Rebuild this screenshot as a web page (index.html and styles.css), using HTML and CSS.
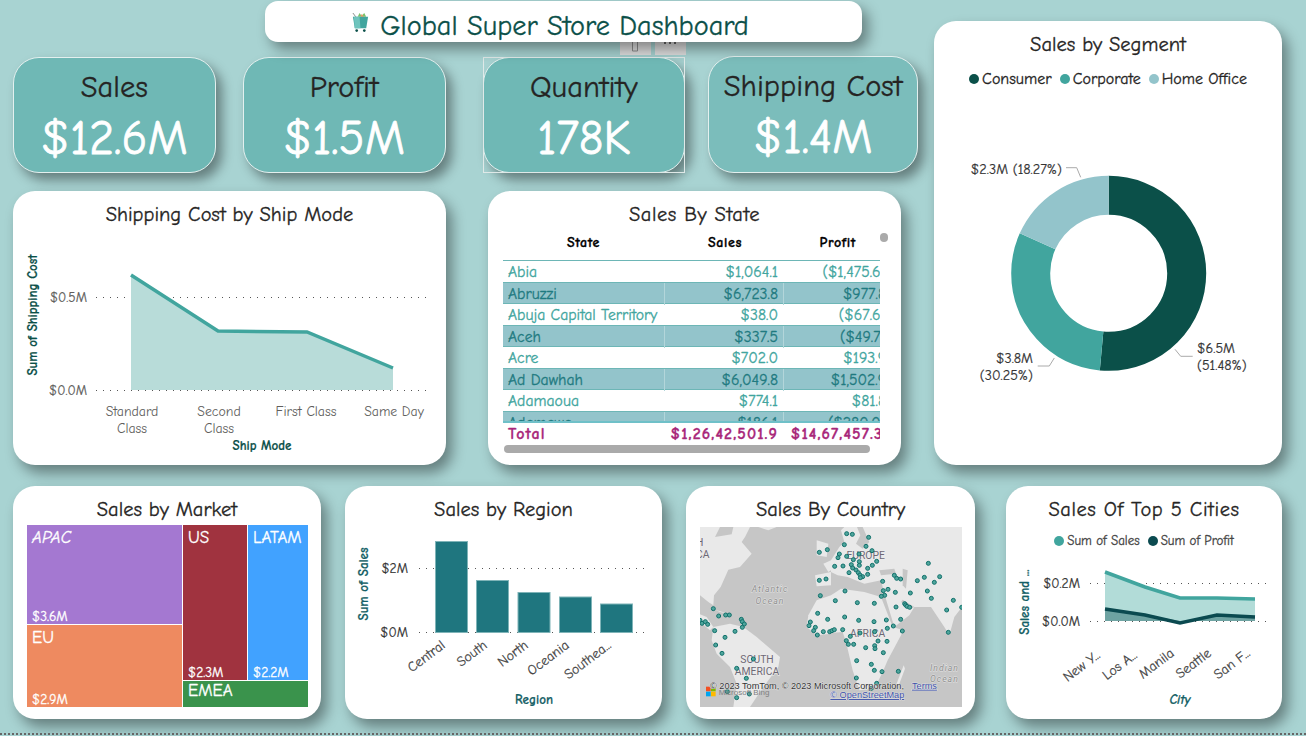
FILE: index.html
```html
<!DOCTYPE html>
<html lang="en">
<head>
    <meta charset="UTF-8">
    <title>Global Super Store Dashboard</title>
    <link rel="stylesheet" href="styles.css">
</head>
<body>
    <div class="page">
        <div class="top">
            <div class="left">
                <div class="header">
                    <svg class="cart" viewBox="0 0 20 22" width="19" height="21">
                        <path d="M2 1l3 4" stroke="#8a8a8a" fill="none"/>
                        <path d="M7 5l2-4 2 3 3-3 2 4z" fill="#7cc36a"/>
                        <path d="M10 5l1-3 3 3z" fill="#ee9a6a"/>
                        <path d="M2 5h16l-2 12H4z" fill="#41a59e"/>
                        <path d="M3 5h6l1 12H4z" fill="#6fc4bd"/>
                        <circle cx="6" cy="19.500" r="1.400" fill="#0b5049"/>
                        <circle cx="14" cy="19.500" r="1.400" fill="#0b5049"/>
                    </svg>
                    <span>Global Super Store Dashboard</span>
                </div>
                <div class="kpis">
                    <div class="kpi kpi-sales"><div class="kpi-label">Sales</div><div class="kpi-value">$12.6M</div></div>
                    <div class="kpi kpi-profit"><div class="kpi-label">Profit</div><div class="kpi-value">$1.5M</div></div>
                    <div class="kpi kpi-qty">
                        <div class="kpi-tools">
                            <div class="tool"><svg width="8" height="10" viewBox="0 0 8 10"><path d="M1.500 0v9h5V0" fill="none" stroke="#8c8c8c"/></svg></div>
                            <div class="tool"><svg width="14" height="3" viewBox="0 0 14 3"><path d="M1 0h2v2H1zM6 0h2v2H6zM11 0h2v2h-2z" fill="#666"/></svg></div>
                        </div>
                        <div class="kpi-label">Quantity</div><div class="kpi-value">178K</div>
                    </div>
                    <div class="kpi kpi-ship"><div class="kpi-label">Shipping Cost</div><div class="kpi-value">$1.4M</div></div>
                </div>
                <div class="mids">
                    <div class="card card-ship">
                        <div class="title">Shipping Cost by Ship Mode</div>
                        <svg class="chart" viewBox="13 231 433 234" width="433" height="234">
                            <path class="grid" d="M96 297.500H430M96 390.500H430"/>
                            <path d="M131 275L218 331L307 332L393 368V390H131z" fill="#b8dcd9"/>
                            <path d="M131 275L218 331L307 332L393 368" class="line" stroke="#41a59e"/>
                            <text class="tick" x="87" y="302" text-anchor="end">$0.5M</text>
                            <text class="tick" x="87" y="395" text-anchor="end">$0.0M</text>
                            <text class="tick-sm" x="132" y="416" text-anchor="middle">Standard</text>
                            <text class="tick-sm" x="132" y="433" text-anchor="middle">Class</text>
                            <text class="tick-sm" x="219" y="416" text-anchor="middle">Second</text>
                            <text class="tick-sm" x="219" y="433" text-anchor="middle">Class</text>
                            <text class="tick-sm" x="306" y="416" text-anchor="middle">First Class</text>
                            <text class="tick-sm" x="394" y="416" text-anchor="middle">Same Day</text>
                            <text class="axis" x="262" y="450" text-anchor="middle">Ship Mode</text>
                            <text class="axis" transform="translate(37 315) rotate(-90)" text-anchor="middle">Sum of Shipping Cost</text>
                        </svg>
                    </div>
                    <div class="card card-state">
                        <div class="title title-wide">Sales By State</div>
                        <div class="tbl">
                            <div class="tbl-row tbl-head"><div class="c-state">State</div><div class="c-num">Sales</div><div class="c-num">Profit</div></div>
                            <div class="tbl-body">
                                <div class="tbl-row"><div>Abia</div><div class="c-num">$1,064.1</div><div class="c-num">($1,475.6)</div></div>
                                <div class="tbl-row"><div>Abruzzi</div><div class="c-num">$6,723.8</div><div class="c-num">$977.8</div></div>
                                <div class="tbl-row"><div>Abuja Capital Territory</div><div class="c-num">$38.0</div><div class="c-num">($67.6)</div></div>
                                <div class="tbl-row"><div>Aceh</div><div class="c-num">$337.5</div><div class="c-num">($49.7)</div></div>
                                <div class="tbl-row"><div>Acre</div><div class="c-num">$702.0</div><div class="c-num">$193.9</div></div>
                                <div class="tbl-row"><div>Ad Dawhah</div><div class="c-num">$6,049.8</div><div class="c-num">$1,502.9</div></div>
                                <div class="tbl-row"><div>Adamaoua</div><div class="c-num">$774.1</div><div class="c-num">$81.8</div></div>
                                <div class="tbl-row"><div>Adamawa</div><div class="c-num">$186.1</div><div class="c-num">($280.0)</div></div>
                            </div>
                            <div class="tbl-row tbl-total"><div>Total</div><div class="c-num">$1,26,42,501.9</div><div class="c-num">$14,67,457.3</div></div>
                        </div>
                        <div class="thumb-v"></div>
                        <div class="thumb-h"></div>
                    </div>
                </div>
            </div>
            <div class="card card-segment">
                <div class="title">Sales by Segment</div>
                <div class="legend legend-seg">
                    <span class="leg"><i class="dot dot-dark"></i>Consumer</span>
                    <span class="leg"><i class="dot dot-mid"></i>Corporate</span>
                    <span class="leg"><i class="dot dot-light"></i>Home Office</span>
                </div>
                <svg class="chart" viewBox="934 100 348 365" width="348" height="365">
                    <g transform="rotate(-90 1108.700 273.300)" fill="none" stroke-width="39">
                        <circle cx="1108.700" cy="273.300" r="78" pathLength="100" stroke="#0b5049" stroke-dasharray="51.48 48.52"/>
                        <circle cx="1108.700" cy="273.300" r="78" pathLength="100" stroke="#41a59e" stroke-dasharray="30.25 69.75" stroke-dashoffset="-51.48"/>
                        <circle cx="1108.700" cy="273.300" r="78" pathLength="100" stroke="#93c4cb" stroke-dasharray="18.27 81.73" stroke-dashoffset="-81.73"/>
                    </g>
                    <path class="leader" d="M1066 167.700H1076.700L1080.700 177.300M1037.700 366H1049.300L1054.300 358M1175 349.300L1180.700 356.300H1192.700"/>
                    <text class="donut-lab" x="1062" y="174" text-anchor="end">$2.3M (18.27%)</text>
                    <text class="donut-lab" x="1033" y="363" text-anchor="end">$3.8M</text>
                    <text class="donut-lab" x="1033" y="380" text-anchor="end">(30.25%)</text>
                    <text class="donut-lab" x="1197" y="353">$6.5M</text>
                    <text class="donut-lab" x="1197" y="370">(51.48%)</text>
                </svg>
            </div>
        </div>
        <div class="bottom">
            <div class="card card-market">
                <div class="title title-b">Sales by Market</div>
                <div class="treemap">
                    <div class="tm tm-apac"><span>APAC</span><span class="tm-val">$3.6M</span></div>
                    <div class="tm tm-us"><span>US</span><span class="tm-val">$2.3M</span></div>
                    <div class="tm tm-latam"><span>LATAM</span><span class="tm-val">$2.2M</span></div>
                    <div class="tm tm-eu"><span>EU</span><span class="tm-val">$2.9M</span></div>
                    <div class="tm tm-emea"><span>EMEA</span></div>
                </div>
            </div>
            <div class="card card-region">
                <div class="title title-b">Sales by Region</div>
                <svg class="chart" viewBox="345 527 317 192" width="317" height="192">
                    <path class="grid" d="M419 568.500H648M419 632.500H648"/>
                    <g fill="#1f767f" stroke="#7fb4b8">
                        <rect x="435.500" y="541.500" width="32" height="91"/>
                        <rect x="476.500" y="580.500" width="32" height="52"/>
                        <rect x="518" y="592.500" width="32" height="40"/>
                        <rect x="559.500" y="597" width="32" height="35.500"/>
                        <rect x="600.500" y="604" width="32" height="28.500"/>
                    </g>
                    <text class="tick tick-dk" x="408" y="573" text-anchor="end">$2M</text>
                    <text class="tick tick-dk" x="408" y="637" text-anchor="end">$0M</text>
                    <text class="tick-rot" transform="translate(446 647) rotate(-37)" text-anchor="end">Central</text>
                    <text class="tick-rot" transform="translate(488 647) rotate(-37)" text-anchor="end">South</text>
                    <text class="tick-rot" transform="translate(529 647) rotate(-37)" text-anchor="end">North</text>
                    <text class="tick-rot" transform="translate(570 647) rotate(-37)" text-anchor="end">Oceania</text>
                    <text class="tick-rot" transform="translate(612 647) rotate(-37)" text-anchor="end">Southea...</text>
                    <text class="axis axis-teal" x="534" y="704" text-anchor="middle">Region</text>
                    <text class="axis axis-teal" transform="translate(368 584) rotate(-90)" text-anchor="middle">Sum of Sales</text>
                </svg>
            </div>
            <div class="card card-country">
                <div class="title title-b">Sales By Country</div>
                <svg class="map" viewBox="60 141 786 540" width="262" height="180">
                    <rect x="60" y="141" width="786" height="540" fill="#c6c6c6"/>
                    <g class="land" fill="#e9e9e9" transform="translate(60 141)">
                        <path d="M0 0H60L45 30L95 22L100 0H150L135 30L125 45L155 80L120 120L85 128L62 180L42 205L40 235L25 225L0 205z"/>
                        <path d="M175 0H230L205 10z"/>
                        <path d="M0 262L20 270L40 300L30 310L0 285z"/>
                        <path d="M45 248L90 262L60 255z"/>
                        <path d="M40 300L90 290L130 300L170 330L240 390L235 420L190 480L150 540H100L110 470L90 420L50 380L35 340z"/>
                        <path d="M350 40L385 50L380 90L350 85z"/>
                        <path d="M345 145L393 135V175L350 178z"/>
                        <path d="M393 100L370 110L385 135L393 130z"/>
                        <path d="M393 205L350 220L325 265L320 300L350 325L393 320z"/>
                    </g>
                    <g class="land" fill="#e9e9e9" transform="translate(453 141)">
                        <path d="M0 100L25 60L40 45L30 10L40 0H393V240L370 270L355 325L340 300L300 240L250 240L235 265L190 300L160 200L150 160L100 170L50 150L20 145L0 135z"/>
                        <path d="M0 205L30 185L100 195L150 210L185 300L218 310L170 400L155 435L130 485L85 490L65 430L45 345L35 315L0 318z"/>
                        <path d="M195 475L218 415L222 425L205 470z"/>
                    </g>
                    <g class="land" fill="#c6c6c6" transform="translate(453 141)">
                        <path d="M78 0H95L115 45L95 65L75 50L88 25z"/>
                        <path d="M145 130L190 125L195 140L150 145z"/>
                        <path d="M215 125L230 130L225 185L215 175z"/>
                        <path d="M215 218L250 240L240 245L210 225z"/>
                    </g>
                    <g class="map-lab">
                        <text x="48" y="198">H</text>
                        <text x="48" y="234">CA</text>
                        <text x="557" y="236" text-anchor="middle">EUROPE</text>
                        <text x="563" y="470" text-anchor="middle">AFRICA</text>
                        <text x="231" y="550" text-anchor="middle">SOUTH</text>
                        <text x="231" y="584" text-anchor="middle">AMERICA</text>
                    </g>
                    <g class="map-sea">
                        <text x="270" y="337" text-anchor="middle">Atlantic</text>
                        <text x="270" y="371" text-anchor="middle">Ocean</text>
                        <text x="750" y="572">Indian</text>
                        <text x="750" y="605">Ocean</text>
                    </g>
                    <g class="dots">
                        <circle cx="500" cy="161" r="6"/><circle cx="517" cy="163" r="6"/><circle cx="566" cy="172" r="6"/><circle cx="493" cy="194" r="6"/><circle cx="558" cy="199" r="6"/><circle cx="418" cy="217" r="6"/><circle cx="442" cy="209" r="6"/><circle cx="478" cy="222" r="6"/><circle cx="474" cy="233" r="6"/><circle cx="500" cy="229" r="6"/><circle cx="537" cy="222" r="6"/><circle cx="576" cy="212" r="6"/><circle cx="520" cy="239" r="6"/><circle cx="538" cy="245" r="6"/><circle cx="538" cy="256" r="6"/><circle cx="514" cy="254" r="6"/><circle cx="518" cy="264" r="6"/><circle cx="590" cy="244" r="6"/><circle cx="577" cy="256" r="6"/><circle cx="563" cy="265" r="6"/><circle cx="464" cy="259" r="6"/><circle cx="489" cy="258" r="6"/><circle cx="528" cy="270" r="6"/><circle cx="535" cy="278" r="6"/><circle cx="507" cy="278" r="6"/><circle cx="563" cy="283" r="6"/><circle cx="540" cy="285" r="6"/><circle cx="548" cy="290" r="6"/><circle cx="541" cy="293" r="6"/><circle cx="418" cy="301" r="6"/><circle cx="438" cy="297" r="6"/><circle cx="643" cy="286" r="6"/><circle cx="650" cy="295" r="6"/><circle cx="662" cy="297" r="6"/><circle cx="712" cy="302" r="6"/><circle cx="733" cy="292" r="6"/><circle cx="779" cy="290" r="6"/><circle cx="763" cy="307" r="6"/><circle cx="745" cy="250" r="6"/><circle cx="608" cy="304" r="6"/><circle cx="610" cy="332" r="6"/><circle cx="624" cy="328" r="6"/><circle cx="646" cy="337" r="6"/><circle cx="691" cy="339" r="6"/><circle cx="742" cy="333" r="6"/><circle cx="754" cy="355" r="6"/><circle cx="614" cy="346" r="6"/><circle cx="604" cy="349" r="6"/><circle cx="495" cy="333" r="6"/><circle cx="421" cy="347" r="6"/><circle cx="466" cy="362" r="6"/><circle cx="532" cy="368" r="6"/><circle cx="583" cy="370" r="6"/><circle cx="820" cy="361" r="6"/><circle cx="845" cy="382" r="6"/><circle cx="800" cy="390" r="6"/><circle cx="805" cy="457" r="6"/><circle cx="648" cy="381" r="6"/><circle cx="674" cy="371" r="6"/><circle cx="677" cy="375" r="6"/><circle cx="681" cy="379" r="6"/><circle cx="689" cy="382" r="6"/><circle cx="413" cy="400" r="6"/><circle cx="443" cy="418" r="6"/><circle cx="494" cy="411" r="6"/><circle cx="536" cy="421" r="6"/><circle cx="582" cy="425" r="6"/><circle cx="619" cy="420" r="6"/><circle cx="662" cy="418" r="6"/><circle cx="640" cy="438" r="6"/><circle cx="622" cy="445" r="6"/><circle cx="667" cy="453" r="6"/><circle cx="391" cy="426" r="6"/><circle cx="387" cy="437" r="6"/><circle cx="406" cy="442" r="6"/><circle cx="401" cy="452" r="6"/><circle cx="412" cy="465" r="6"/><circle cx="430" cy="455" r="6"/><circle cx="449" cy="455" r="6"/><circle cx="456" cy="452" r="6"/><circle cx="463" cy="449" r="6"/><circle cx="488" cy="449" r="6"/><circle cx="511" cy="469" r="6"/><circle cx="540" cy="459" r="6"/><circle cx="584" cy="455" r="6"/><circle cx="499" cy="482" r="6"/><circle cx="505" cy="493" r="6"/><circle cx="521" cy="493" r="6"/><circle cx="594" cy="483" r="6"/><circle cx="621" cy="484" r="6"/><circle cx="557" cy="503" r="6"/><circle cx="584" cy="497" r="6"/><circle cx="585" cy="506" r="6"/><circle cx="610" cy="518" r="6"/><circle cx="530" cy="542" r="6"/><circle cx="574" cy="553" r="6"/><circle cx="583" cy="571" r="6"/><circle cx="606" cy="575" r="6"/><circle cx="655" cy="574" r="6"/><circle cx="529" cy="594" r="6"/><circle cx="590" cy="610" r="6"/><circle cx="574" cy="625" r="6"/>
                        <circle cx="60" cy="421" r="6"/><circle cx="66" cy="430" r="6"/><circle cx="76" cy="425" r="6"/><circle cx="83" cy="433" r="6"/><circle cx="100" cy="386" r="6"/><circle cx="116" cy="408" r="6"/><circle cx="137" cy="405" r="6"/><circle cx="148" cy="405" r="6"/><circle cx="184" cy="418" r="6"/><circle cx="187" cy="425" r="6"/><circle cx="193" cy="432" r="6"/><circle cx="187" cy="442" r="6"/><circle cx="104" cy="452" r="6"/><circle cx="165" cy="454" r="6"/><circle cx="135" cy="472" r="6"/><circle cx="107" cy="495" r="6"/><circle cx="126" cy="520" r="6"/><circle cx="220" cy="537" r="6"/><circle cx="170" cy="565" r="6"/><circle cx="199" cy="595" r="6"/><circle cx="208" cy="642" r="6"/><circle cx="142" cy="635" r="6"/><circle cx="170" cy="653" r="6"/>
                    </g>
                    <g class="bing">
                        <rect x="78" y="620" width="14" height="14" fill="#f25022"/><rect x="93" y="620" width="14" height="14" fill="#7fba00"/>
                        <rect x="78" y="635" width="14" height="14" fill="#00a4ef"/><rect x="93" y="635" width="14" height="14" fill="#ffb900"/>
                        <text x="116" y="645">Microsoft Bing</text>
                    </g>
                    <text class="attrib" x="90" y="626">© 2023 TomTom, © 2023 Microsoft Corporation,</text>
                    <text class="attrib attrib-link" x="696" y="626">Terms</text>
                    <text class="attrib attrib-link" x="451" y="654">© OpenStreetMap</text>
                </svg>
            </div>
            <div class="card card-cities">
                <div class="title title-b title-wide">Sales Of Top 5 Cities</div>
                <div class="legend legend-city">
                    <span class="leg"><i class="dot dot-mid"></i>Sum of Sales</span>
                    <span class="leg"><i class="dot dot-darker"></i>Sum of Profit</span>
                </div>
                <svg class="chart" viewBox="1006 552 276 167" width="276" height="167">
                    <path class="grid" d="M1090 583.500H1270M1090 621.500H1270"/>
                    <path d="M1105 572L1145 587L1180 598L1217 598L1255 599V621H1105z" fill="#b2dcd8"/>
                    <path d="M1105 609L1145 615L1180 621H1105zM1190 621L1217 615L1255 617V621z" fill="#6ea3a2"/>
                    <path d="M1105 572L1145 587L1180 598L1217 598L1255 599" class="line" stroke="#41a59e"/>
                    <path d="M1105 609L1145 615L1180 623L1217 615L1255 617" class="line" stroke="#0b4a50"/>
                    <text class="tick tick-dk" x="1080" y="588" text-anchor="end">$0.2M</text>
                    <text class="tick tick-dk" x="1080" y="626" text-anchor="end">$0.0M</text>
                    <text class="tick-rot" transform="translate(1101 657) rotate(-37)" text-anchor="end">New Y...</text>
                    <text class="tick-rot" transform="translate(1138 657) rotate(-37)" text-anchor="end">Los A...</text>
                    <text class="tick-rot" transform="translate(1175 655) rotate(-37)" text-anchor="end">Manila</text>
                    <text class="tick-rot" transform="translate(1212 655) rotate(-37)" text-anchor="end">Seattle</text>
                    <text class="tick-rot" transform="translate(1251 655) rotate(-37)" text-anchor="end">San F...</text>
                    <text class="axis axis-teal axis-it" x="1180" y="704" text-anchor="middle">City</text>
                    <text class="axis axis-teal" transform="translate(1029 602) rotate(-90)" text-anchor="middle">Sales and ...</text>
                </svg>
            </div>
        </div>
        <div class="rule"></div>
    </div>
</body>
</html>
```

FILE: styles.css
```css
*{
    box-sizing: border-box;
}
body{
    margin: 0;
    font-family: "Comic Sans MS", "Comic Neue", cursive;
    color: #252423;
    -webkit-text-stroke: 0.3px;
}
.page{
    position: relative;
    width: 1306px;
    height: 736px;
    padding: 1px 24px 0 13px;
    overflow: hidden;
    background-color: #a8d3d2;
}
.top{
    display: flex;
    justify-content: space-between;
}
.left{
    width: 905px;
}
.header{
    display: flex;
    align-items: center;
    justify-content: center;
    gap: 10px;
    width: 597px;
    height: 41px;
    margin-left: 252px;
    padding: 0 27px 0 0;
    border-radius: 13px;
    background-color: white;
    box-shadow: 6px 7px 14px rgba(0, 0, 0, 0.4);
    color: #0b5049;
    font-size: 28.300px;
    position: relative;
    z-index: 2;
}
.header span{
    padding-top: 9px;
    line-height: 32px;
}
.cart{
    margin-top: 1px;
}
.kpis{
    display: flex;
    align-items: flex-start;
    margin-top: 15px;
}
.kpi{
    position: relative;
    width: 203px;
    height: 116px;
    border: 1px solid #e3f0ef;
    border-radius: 26px;
    background-color: #6fb8b5;
    box-shadow: 6px 7px 12px rgba(0, 0, 0, 0.4);
    text-align: center;
}
.kpi-profit{
    margin-left: 27px;
}
.kpi-qty{
    margin-left: 37px;
}
.kpi-qty::after{
    content: "";
    position: absolute;
    inset: -1px;
    border: 1px solid #dfe9e8;
}
.kpi-ship{
    width: 210px;
    height: 117px;
    margin-left: 23px;
    margin-top: -1px;
    background-color: #7bbdbb;
}
.kpi-label{
    margin-top: 10px;
    font-size: 30.500px;
    line-height: 40px;
}
.kpi-value{
    margin-top: 3px;
    font-size: 48px;
    line-height: 56px;
    color: white;
    -webkit-text-stroke: 0.8px;
}
.kpi-tools{
    position: absolute;
    top: -22px;
    left: 136px;
    display: flex;
    gap: 4px;
}
.tool{
    display: flex;
    align-items: flex-start;
    justify-content: center;
    width: 31px;
    height: 19px;
    padding-top: 6px;
    background-color: #dcdcdc;
}
.mids{
    display: flex;
    gap: 42px;
    margin-top: 18px;
}
.card{
    position: relative;
    border-radius: 22px;
    background-color: white;
    box-shadow: 6px 8px 14px rgba(0, 0, 0, 0.4);
}
.card-ship{
    width: 433px;
    height: 274px;
}
.card-state{
    width: 413px;
    height: 274px;
}
.card-segment{
    width: 348px;
    height: 444px;
    margin-top: 20px;
}
.title{
    height: 40px;
    padding-top: 10px;
    font-size: 20.500px;
    line-height: 27px;
    text-align: center;
}
.title-b{
    height: 41px;
}
.title-wide{
    letter-spacing: 0.550px;
}
.chart{
    display: block;
}
.chart text{
    font-family: "Comic Sans MS", "Comic Neue", cursive;
    -webkit-text-stroke: 0;
}
.grid{
    fill: none;
    stroke: #555;
    stroke-dasharray: 1 6;
}
.line{
    fill: none;
    stroke-width: 3.500;
}
.tick{
    font-size: 13.500px;
    fill: #605e5c;
    stroke: #605e5c;
    stroke-width: 0.2px;
}
.tick-dk{
    fill: #333;
    stroke: #333;
}
.tick-sm{
    font-size: 13.800px;
    fill: #605e5c;
}
.tick-rot{
    font-size: 14px;
    fill: #444;
    stroke: #444;
    stroke-width: 0.2px;
}
.axis{
    font-size: 13px;
    font-weight: bold;
    fill: #0b5049;
    stroke: #0b5049;
    stroke-width: 0.2px;
}
.axis-teal{
    fill: #155f66;
    stroke: #155f66;
}
.axis-it{
    font-style: italic;
}
.tbl{
    width: 377px;
    margin-left: 15px;
    overflow: hidden;
    font-size: 15.700px;
}
.tbl-row{
    display: grid;
    grid-template-columns: 161px 119px 108px;
    width: 388px;
    height: 21.500px;
    line-height: 22px;
    color: #41a59e;
    border-bottom: 1px solid #6db6b6;
}
.tbl-row > div{
    padding: 0 5px;
    white-space: nowrap;
}
.tbl-body .tbl-row:nth-child(even){
    background-color: #93c4cb;
    color: #1f7a80;
}
.tbl-body .tbl-row:nth-child(even) > div + div{
    border-left: 1px solid #b3d6da;
}
.c-num{
    text-align: right;
    overflow: hidden;
}
.tbl-head{
    height: 30px;
    line-height: 24px;
    color: black;
    font-size: 14px;
    font-weight: bold;
    letter-spacing: 0.6px;
}
.tbl-head > .c-state{
    text-align: center;
}
.tbl-head > .c-state + .c-num{
    padding-right: 41px;
}
.tbl-head > .c-num:last-child{
    padding-right: 35px;
}
.tbl-body{
    height: 162px;
    overflow: hidden;
    border-bottom: 2px solid #6fc0c8;
}
.tbl-total{
    height: 24px;
    border: none;
    color: #a8277a;
    font-size: 16px;
    font-weight: bold;
    letter-spacing: 1.100px;
}
.tbl-total > .c-num:last-child{
    padding-right: 8px;
}
.thumb-v{
    position: absolute;
    top: 42px;
    left: 392px;
    width: 8px;
    height: 9px;
    border-radius: 4px;
    background-color: #aaa;
}
.thumb-h{
    position: absolute;
    top: 254px;
    left: 16px;
    width: 366px;
    height: 8px;
    border-radius: 4px;
    background-color: #aaa;
}
.legend{
    display: flex;
    justify-content: center;
}
.legend-seg{
    gap: 8px;
    height: 39px;
    margin-top: -2px;
    margin-bottom: 2px;
    font-size: 16px;
    line-height: 26px;
}
.legend-city{
    gap: 8px;
    height: 25px;
    padding-top: 2px;
    font-size: 13px;
    line-height: 25px;
    color: #444;
}
.leg{
    display: flex;
    align-items: center;
    gap: 3px;
}
.dot{
    width: 10px;
    height: 10px;
    border-radius: 50%;
}
.dot-dark{
    background-color: #0b5049;
}
.dot-darker{
    background-color: #0b4a50;
}
.dot-mid{
    background-color: #41a59e;
}
.dot-light{
    background-color: #93c4cb;
}
.leader{
    fill: none;
    stroke: #aaa;
}
.donut-lab{
    font-size: 14.200px;
    fill: #333;
    stroke: #333;
    stroke-width: 0.2px;
}
.bottom{
    display: flex;
    margin-top: 21px;
}
.bottom .card{
    height: 233px;
}
.card-market{
    width: 308px;
}
.card-region{
    width: 317px;
    margin-left: 24px;
}
.card-country{
    width: 289px;
    margin-left: 24px;
    padding-left: 14px;
}
.card-country .title{
    margin-left: -14px;
}
.card-cities{
    width: 276px;
    margin-left: 31px;
}
.treemap{
    display: grid;
    grid-template-columns: 155px 64px 60px;
    grid-template-rows: 99px 55px 26px;
    gap: 1px;
    height: 182px;
    margin: -2px 0 0 14px;
    color: white;
    font-size: 17px;
}
.tm{
    display: flex;
    flex-direction: column;
    justify-content: space-between;
    padding: 3px 5px 0;
}
.tm-val{
    font-size: 13.500px;
}
.tm-apac{
    grid-column: 1;
    grid-row: 1;
    background-color: #a478d1;
    font-style: italic;
}
.tm-apac .tm-val{
    font-style: normal;
}
.tm-us{
    grid-column: 2;
    grid-row: 1 / 3;
    background-color: #a0333f;
}
.tm-latam{
    grid-column: 3;
    grid-row: 1 / 3;
    background-color: #41a2ff;
}
.tm-eu{
    grid-column: 1;
    grid-row: 2 / 4;
    background-color: #ee8a60;
}
.tm-emea{
    grid-column: 2 / 4;
    grid-row: 3;
    padding-top: 0;
    background-color: #3a934c;
}
.map{
    display: block;
}
.map text{
    -webkit-text-stroke: 0;
}
.land{
    filter: blur(1px);
}
.map-lab{
    font-family: "Roboto", sans-serif;
    font-size: 31px;
    fill: #6d6875;
    stroke: #eee;
    stroke-width: 3px;
    paint-order: stroke;
}
.map-sea{
    font-family: "Roboto", sans-serif;
    font-size: 26px;
    font-style: italic;
    letter-spacing: 3px;
    fill: #8f8f8f;
    stroke: #e2e2e2;
    stroke-width: 3px;
    paint-order: stroke;
}
.dots circle{
    fill: #4fa59c;
    stroke: #11706b;
    stroke-width: 3;
}
.bing text{
    font-family: "Liberation Sans", sans-serif;
    font-size: 24px;
    fill: #808080;
}
.attrib{
    font-family: "Liberation Sans", sans-serif;
    font-size: 27.500px;
    fill: #333;
    stroke: #eee;
    stroke-width: 2px;
    paint-order: stroke;
}
.attrib-link{
    fill: #3a4fa8;
    text-decoration: underline;
}
.rule{
    position: absolute;
    left: 0;
    right: 0;
    top: 733px;
    border-top: 2px dotted #666;
}
```
